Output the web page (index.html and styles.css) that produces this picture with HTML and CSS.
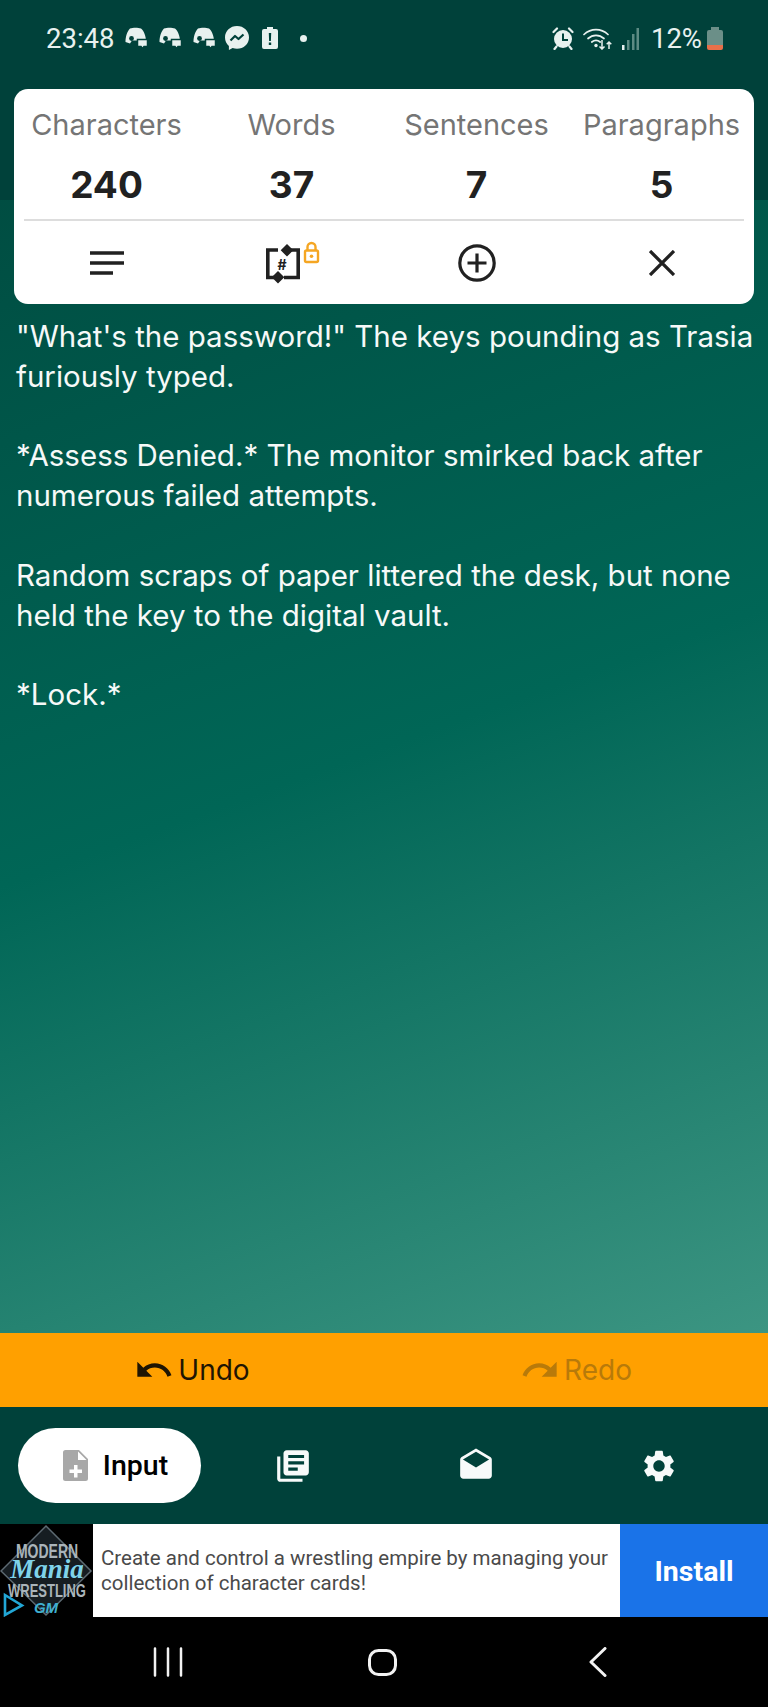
FILE: index.html
```html
<!DOCTYPE html>
<html lang="en">
<head>
<meta charset="utf-8">
<title>Word counter</title>
<link rel="stylesheet" href="styles.css">
</head>
<body>
<div class="app">
  <main class="main">
    <header class="status">
      <div class="status-left">
        <span class="time">23:48</span>
        <svg class="si-discord" viewBox="0 0 25 22"><path fill="#e8f1ef" d="M7 1.500c3-1 8-1 11 0 3 2.500 5 7.500 5 13l-3.500 1.500-2-2.500H9l-2 3-4.500-1.500c0-5 1.500-10.500 4.500-13.500z"/><circle cx="8.500" cy="11.500" r="2.400" fill="#00413a"/><path fill="#e8f1ef" stroke="#00413a" stroke-width="1.500" d="M14.500 12.500H24.500v7h-3.500l-1.500 2-1.500-2h-3.500z"/></svg>
        <svg class="si-discord" viewBox="0 0 25 22"><path fill="#e8f1ef" d="M7 1.500c3-1 8-1 11 0 3 2.500 5 7.500 5 13l-3.500 1.500-2-2.500H9l-2 3-4.500-1.500c0-5 1.500-10.500 4.500-13.500z"/><circle cx="8.500" cy="11.500" r="2.400" fill="#00413a"/><path fill="#e8f1ef" stroke="#00413a" stroke-width="1.500" d="M14.500 12.500H24.500v7h-3.500l-1.500 2-1.500-2h-3.500z"/></svg>
        <svg class="si-discord" viewBox="0 0 25 22"><path fill="#e8f1ef" d="M7 1.500c3-1 8-1 11 0 3 2.500 5 7.500 5 13l-3.500 1.500-2-2.500H9l-2 3-4.500-1.500c0-5 1.500-10.500 4.500-13.500z"/><circle cx="8.500" cy="11.500" r="2.400" fill="#00413a"/><path fill="#e8f1ef" stroke="#00413a" stroke-width="1.500" d="M14.500 12.500H24.500v7h-3.500l-1.500 2-1.500-2h-3.500z"/></svg>
        <svg class="si-messenger" viewBox="0 0 24 24"><path fill="#e8f1ef" d="M12 0C5.300 0 0 4.900 0 11.500c0 3.500 1.500 6.500 3.900 8.600V24l3.700-2c1.400.5 2.900.8 4.400.8 6.700 0 12-4.900 12-11.300C24 4.900 18.700 0 12 0z"/><path fill="none" stroke="#00413a" stroke-width="2.200" stroke-linejoin="round" d="M5.500 14.500l4.500-4.500 3.500 3 5-4.500"/></svg>
        <svg class="si-batt" viewBox="0 0 16 22"><path fill="#e8f1ef" d="M5 0h6v2h3a2 2 0 0 1 2 2v16a2 2 0 0 1-2 2H2a2 2 0 0 1-2-2V4a2 2 0 0 1 2-2h3z"/><path fill="#00413a" d="M6.800 6h2.400l-.3 8H7.100zM6.800 15.500h2.400V18H6.800z"/></svg>
        <span class="dot"></span>
      </div>
      <div class="status-right">
        <svg class="si-alarm" viewBox="0 0 22 23"><circle cx="11" cy="12" r="9" fill="#e8f1ef"/><path fill="none" stroke="#e8f1ef" stroke-width="2.200" stroke-linecap="round" d="M1.500 5L5 1.500M20.500 5L17 1.500M4.500 19.500L2.500 22M17.500 19.500l2 2.500"/><path fill="none" stroke="#00413a" stroke-width="2" d="M11 6.500V13h5"/></svg>
        <svg class="si-wifi" viewBox="0 0 30 23"><g fill="none" stroke="#e8f1ef" stroke-width="1.700" stroke-linecap="round"><path d="M1 7.500C8 1 18 1 25 7.500"/><path d="M5 11.500c4.800-4.200 11.200-4.200 16 0"/><path d="M8.800 15c2.600-2 5.800-2 8.400 0"/></g><circle cx="13" cy="18.500" r="1.700" fill="#e8f1ef"/><path fill="none" stroke="#e8f1ef" stroke-width="1.500" d="M19 13v9M16.500 19.500L19 22l2.500-2.500M26 22v-7M23.700 17.200L26 15l2.300 2.200"/></svg>
        <svg class="si-signal" viewBox="0 0 17 23"><rect x="0" y="18" width="2.500" height="5" fill="#e8f1ef"/><rect x="5" y="13" width="2.500" height="10" fill="#5d8b83"/><rect x="10" y="7" width="2.500" height="16" fill="#5d8b83"/><rect x="14.500" y="1" width="2.500" height="22" fill="#5d8b83"/></svg>
        <span class="pct">12%</span>
        <svg class="si-level" viewBox="0 0 16 23"><path fill="#6b8f88" d="M4 0h8v3h2a2 2 0 0 1 2 2v13H0V5a2 2 0 0 1 2-2h2z"/><path fill="#e8704a" d="M0 18h16v3a2 2 0 0 1-2 2H2a2 2 0 0 1-2-2z"/></svg>
      </div>
    </header>

    <section class="card">
      <div class="stats">
        <div class="stat"><span class="label">Characters</span><span class="value">240</span></div>
        <div class="stat"><span class="label">Words</span><span class="value">37</span></div>
        <div class="stat"><span class="label">Sentences</span><span class="value">7</span></div>
        <div class="stat"><span class="label">Paragraphs</span><span class="value">5</span></div>
      </div>
      <div class="rule"></div>
      <div class="tools">
        <div class="tool">
          <svg class="ti-notes" viewBox="0 0 34 24"><path fill="none" stroke="#212121" stroke-width="3.600" d="M0 2h34M0 12h34M0 22h23"/></svg>
        </div>
        <div class="tool">
          <svg class="ti-count" viewBox="0 0 56 44">
            <g fill="none" stroke="#212121" stroke-width="3.600"><path d="M14 9H3.800v27.500H10"/><path d="M26 9h8.200v27.500H20"/></g>
            <path fill="#212121" d="M23 3l6.300 6.300-6.300 6.300-6.300-6.300zM14 30l6.300 6.300-6.300 6.300-6.300-6.300z"/>
            <text class="hash" x="18" y="28.500" text-anchor="middle">#</text>
            <g fill="none" stroke="#f5a623" stroke-width="2.400"><rect x="41" y="9.500" width="13" height="11.500" rx="1.500"/><path d="M43.500 9.500V6a4 4 0 0 1 8 0v3.500"/></g>
            <circle cx="47.500" cy="15.200" r="1.800" fill="#f5a623"/>
          </svg>
        </div>
        <div class="tool">
          <svg class="ti-add" viewBox="0 0 38 38"><g fill="none" stroke="#212121" stroke-width="3.200"><circle cx="19" cy="19" r="17.200"/><path d="M19 9.500v19M9.500 19h19"/></g></svg>
        </div>
        <div class="tool">
          <svg class="ti-close" viewBox="0 0 26 26"><path fill="none" stroke="#212121" stroke-width="3.300" d="M1 1l24 24M25 1L1 25"/></svg>
        </div>
      </div>
    </section>

    <article class="story">
      <p>"What's the password!" The keys pounding as Trasia furiously typed.</p>
      <p>*Assess Denied.* The monitor smirked back after numerous failed attempts.</p>
      <p>Random scraps of paper littered the desk, but none held the key to the digital vault.</p>
      <p>*Lock.*</p>
    </article>
  </main>

  <div class="history">
    <div class="hist-btn">
      <svg class="hist-icon" viewBox="0 0 24 24"><path fill="#1f1503" d="M12.500 8c-2.650 0-5.050.99-6.900 2.600L2 7v9h9l-3.620-3.620c1.390-1.160 3.160-1.880 5.120-1.880 3.540 0 6.550 2.310 7.600 5.500l2.370-.78C21.080 11.030 17.150 8 12.500 8z"/></svg>
      <span>Undo</span>
    </div>
    <div class="hist-btn off">
      <svg class="hist-icon" viewBox="0 0 24 24"><path fill="#b87a0a" d="M18.400 10.600C16.550 8.990 14.150 8 11.500 8c-4.650 0-8.580 3.030-9.970 7.220L3.900 16c1.050-3.190 4.050-5.500 7.600-5.500 1.950 0 3.730.72 5.120 1.880L13 16h9V7l-3.600 3.600z"/></svg>
      <span>Redo</span>
    </div>
  </div>

  <nav class="tabs">
    <div class="tab active">
      <svg class="tab-file" viewBox="0 0 25 31"><path fill="#a8a8a8" d="M2.500 0H16l9 9v19.500a2.500 2.500 0 0 1-2.500 2.500h-20A2.500 2.500 0 0 1 0 28.500v-26A2.500 2.500 0 0 1 2.500 0z"/><path fill="#fff" d="M15 1.500V10h8.500zM11 15h3.500v4.500H19V23h-4.500v4.500H11V23H6.500v-3.500H11z"/></svg>
      <span>Input</span>
    </div>
    <div class="tab">
      <svg class="tab-icon" viewBox="0 0 24 24"><path fill="#f7fafa" d="M4 6H2v14c0 1.100.9 2 2 2h14v-2H4V6zm16-4H8c-1.100 0-2 .9-2 2v12c0 1.100.9 2 2 2h12c1.100 0 2-.9 2-2V4c0-1.100-.9-2-2-2zm-1 9H9V9h10v2zm-4 4H9v-2h6v2zm4-8H9V5h10v2z"/></svg>
    </div>
    <div class="tab">
      <svg class="tab-icon" viewBox="0 0 24 24"><path fill="#f7fafa" d="M21.990 8c0-.72-.37-1.350-.94-1.700L12 1 2.950 6.300C2.380 6.650 2 7.280 2 8v10c0 1.100.9 2 2 2h16c1.100 0 2-.9 2-2l-.01-10zM12 13L3.740 7.840 12 3l8.260 4.840L12 13z"/></svg>
    </div>
    <div class="tab">
      <svg class="tab-icon" viewBox="0 0 24 24"><path fill="#f7fafa" d="M19.140 12.940c.04-.3.06-.61.06-.94 0-.32-.02-.64-.07-.94l2.030-1.580c.18-.14.23-.41.12-.61l-1.920-3.320c-.12-.22-.37-.29-.59-.22l-2.390.96c-.5-.38-1.030-.7-1.620-.94l-.36-2.540c-.04-.24-.24-.41-.48-.41h-3.840c-.24 0-.43.17-.47.41l-.36 2.540c-.59.24-1.130.57-1.620.94l-2.390-.96c-.22-.08-.47 0-.59.22L2.740 8.870c-.12.21-.08.47.12.61l2.030 1.580c-.05.3-.09.63-.09.94s.02.64.07.94l-2.030 1.580c-.18.14-.23.41-.12.61l1.920 3.320c.12.22.37.29.59.22l2.390-.96c.5.38 1.030.7 1.620.94l.36 2.540c.05.24.24.41.48.41h3.840c.24 0 .44-.17.47-.41l.36-2.540c.59-.24 1.130-.56 1.620-.94l2.390.96c.22.08.47 0 .59-.22l1.920-3.320c.12-.22.07-.47-.12-.61l-2.010-1.580zM12 15.600c-1.980 0-3.600-1.620-3.600-3.600s1.620-3.600 3.600-3.600 3.600 1.620 3.600 3.600-1.620 3.600-3.600 3.600z"/></svg>
    </div>
  </nav>

  <aside class="ad">
    <svg class="ad-logo" viewBox="0 0 93 93">
      <path d="M46 2L91 47 46 91 1 47z" fill="#161d22" stroke="#5d6a72" stroke-width="1.500"/>
      <text class="lg-grey lg-top" transform="translate(47 34) scale(1 1.500)" text-anchor="middle">MODERN</text>
      <text class="lg-blue" x="47" y="54" text-anchor="middle">Mania</text>
      <text class="lg-grey lg-mid" transform="translate(47 73) scale(1 1.400)" text-anchor="middle">WRESTLING</text>
      <text class="lg-gm" x="46" y="89" text-anchor="middle">GM</text>
      <path d="M5 71l17 10.500L5 91z" fill="none" stroke="#22a7d6" stroke-width="2.600"/>
    </svg>
    <p class="ad-copy">Create and control a wrestling empire by managing your collection of character cards!</p>
    <div class="ad-cta">Install</div>
  </aside>

  <footer class="sysnav">
    <svg class="sys-recents" viewBox="0 0 30 30"><path fill="none" stroke="#f2f2f2" stroke-width="2.500" stroke-linecap="round" d="M2 1.500v27M15 1.500v27M28 1.500v27"/></svg>
    <svg class="sys-home" viewBox="0 0 29 27"><rect x="1.500" y="1.500" width="26" height="24" rx="9" fill="none" stroke="#f2f2f2" stroke-width="3"/></svg>
    <svg class="sys-back" viewBox="0 0 18 30"><path fill="none" stroke="#f2f2f2" stroke-width="3" stroke-linecap="round" stroke-linejoin="round" d="M16 1.500L2 15l14 13.500"/></svg>
  </footer>
</div>
</body>
</html>
```

FILE: styles.css
```css
* { box-sizing: border-box; }
html, body { margin: 0; padding: 0; }
body { font-family: "Inter", "Noto Sans", sans-serif; background: #000; }
svg { display: block; flex: none; }

.app { width: 768px; height: 1707px; display: flex; flex-direction: column; overflow: hidden; }

.main {
  flex: 1;
  min-height: 0;
  background:
    linear-gradient(#00413a, #00413a) 0 0 / 100% 200px no-repeat,
    linear-gradient(160deg, #00463c 0%, #006656 55%, #3c9582 100%);
}

.status {
  height: 89px;
  padding: 0 45px 13px 46px;
  display: flex;
  align-items: center;
  justify-content: space-between;
  color: #e8f1ef;
  font-family: "Roboto", sans-serif;
  font-size: 27.500px;
}
.status-left, .status-right { display: flex; align-items: center; }
.status-left { gap: 9px; }
.si-discord { width: 25px; height: 22px; }
.si-messenger { width: 24px; height: 24px; }
.si-batt { width: 16px; height: 22px; margin-left: 4px; }
.dot { width: 7px; height: 7px; border-radius: 50%; background: #e8f1ef; margin-left: 13px; }
.si-alarm { width: 22px; height: 23px; }
.si-wifi { width: 30px; height: 23px; margin-left: 9px; }
.si-signal { width: 17px; height: 23px; margin-left: 9px; }
.pct { margin: 0 5px 0 12px; }
.si-level { width: 16px; height: 23px; }

.card {
  width: 740px;
  height: 215px;
  margin-left: 14px;
  border-radius: 14px;
  background: #fff;
  display: flex;
  flex-direction: column;
}
.stats {
  display: grid;
  grid-template-columns: repeat(4, 185px);
  padding: 18px 0 12px;
}
.stat { display: flex; flex-direction: column; align-items: center; }
.label { font-size: 29px; line-height: 36px; color: #757575; white-space: nowrap; }
.value { font-size: 37px; line-height: 44px; margin-top: 20px; font-weight: 700; color: #212121; }
.rule { height: 2px; margin: 0 10px; background: #ddd; }
.tools {
  flex: 1;
  display: grid;
  grid-template-columns: repeat(4, 185px);
  align-items: center;
  justify-items: center;
}
.tool { display: flex; }
.ti-notes { width: 34px; height: 24px; }
.ti-count { width: 56px; height: 44px; }
.ti-add { width: 38px; height: 38px; }
.ti-close { width: 26px; height: 26px; }
.hash { font-size: 14px; font-weight: 700; fill: #212121; font-family: "Inter", sans-serif; }

.story { margin: 0; padding: 13px 14px 0 16px; color: #f6f9f8; font-size: 29.500px; line-height: 39.800px; }
.story p { margin: 0 0 39.800px; }

.history { height: 74px; background: #ffa000; display: grid; grid-template-columns: 1fr 1fr; }
.hist-btn { display: flex; align-items: center; justify-content: center; gap: 4px; font-size: 28px; color: #1f1503; }
.hist-btn.off { color: #b87a0a; }
.hist-icon { width: 40px; height: 40px; }

.tabs {
  height: 117px;
  background: #00413a;
  padding: 0 18px;
  display: grid;
  grid-template-columns: repeat(4, 183px);
  align-items: center;
  justify-items: center;
}
.tab { display: flex; align-items: center; justify-content: center; gap: 15px; }
.tab.active {
  width: 183px;
  height: 75px;
  padding-left: 12px;
  border-radius: 38px;
  background: #fff;
  color: #000;
  font-size: 28.500px;
  font-weight: 500;
  font-family: "Roboto", sans-serif;
}
.tab-file { width: 25px; height: 31px; }
.tab-icon { width: 38px; height: 38px; }

.ad { height: 93px; display: flex; background: #fff; }
.ad-logo { width: 93px; height: 93px; background: #000; }
.ad-copy {
  flex: 1;
  margin: 0;
  padding: 0 8px;
  align-self: center;
  font-family: "Roboto", sans-serif;
  font-size: 20.500px;
  line-height: 25px;
  color: #4a4a4a;
}
.ad-cta {
  width: 148px;
  padding-top: 2px;
  background: #1a73e8;
  color: #fff;
  font-family: "Roboto", sans-serif;
  font-size: 28.500px;
  font-weight: 700;
  display: flex;
  align-items: center;
  justify-content: center;
}
.lg-grey { font-family: "Liberation Sans", sans-serif; font-weight: 700; fill: #aab4ba; }
.lg-top { font-size: 14px; }
.lg-mid { font-size: 13px; }
.lg-blue { font-family: "Liberation Serif", serif; font-style: italic; font-weight: 700; font-size: 27px; fill: #7fd3ea; }
.lg-gm { font-family: "Liberation Sans", sans-serif; font-weight: 700; font-style: italic; font-size: 15px; fill: #3fb0d0; }

.sysnav {
  height: 90px;
  padding: 30px 0 0 60px;
  background: #000;
  display: grid;
  grid-template-columns: repeat(3, 215px);
  align-items: start;
  justify-items: center;
}
.sys-recents { width: 30px; height: 30px; }
.sys-home { width: 29px; height: 27px; margin-top: 2px; }
.sys-back { width: 18px; height: 30px; }
```
